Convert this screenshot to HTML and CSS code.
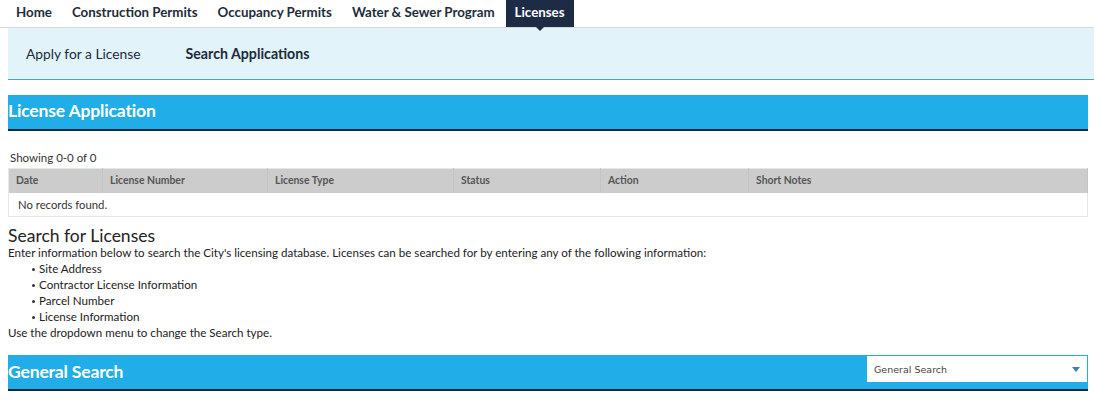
FILE: index.html
```html
<!DOCTYPE html>
<html lang="en">
<head>
    <meta charset="UTF-8">
    <title>Licenses</title>
    <link rel="stylesheet" href="styles.css">
</head>
<body>

    <div id="topnav">
        <a class="tab" href="#">Home</a>
        <a class="tab" href="#">Construction Permits</a>
        <a class="tab" href="#">Occupancy Permits</a>
        <a class="tab" href="#">Water &amp; Sewer Program</a>
        <a class="tab selected" href="#">Licenses</a>
    </div>

    <div id="subnav">
        <a class="sublink" href="#">Apply for a License</a>
        <a class="sublink current" href="#">Search Applications</a>
    </div>

    <div class="section-bar first">
        <h2>License Application</h2>
    </div>

    <div id="results">
        <div class="count">Showing 0-0 of 0</div>
        <table class="grid">
            <thead>
                <tr>
                    <th class="c-date">Date</th>
                    <th class="c-num">License Number</th>
                    <th class="c-type">License Type</th>
                    <th class="c-status">Status</th>
                    <th class="c-action">Action</th>
                    <th>Short Notes</th>
                </tr>
            </thead>
            <tbody>
                <tr>
                    <td colspan="6">No records found.</td>
                </tr>
            </tbody>
        </table>
    </div>

    <div id="instructions">
        <h3>Search for Licenses</h3>
        <p>Enter information below to search the City's licensing database. Licenses can be searched for by entering any of the following information:</p>
        <ul>
            <li>Site Address</li>
            <li>Contractor License Information</li>
            <li>Parcel Number</li>
            <li>License Information</li>
        </ul>
        <p>Use the dropdown menu to change the Search type.</p>
    </div>

    <div class="section-bar search">
        <h2>General Search</h2>
        <div class="select">
            <span>General Search</span>
            <span class="caret"></span>
        </div>
    </div>

</body>
</html>
```

FILE: styles.css
```css
* {
    box-sizing: border-box;
}

body {
    margin: 0;
    font-family: Lato, 'Open Sans', sans-serif;
    color: #222;
    background-color: #ffffff;
}

/* TOP NAVIGATION */
#topnav {
    display: flex;
    height: 28px;
    padding-left: 6px;
    border-bottom: 1px solid #d6d6d6;
}

.tab {
    position: relative;
    display: block;
    padding: 4px 10px 0 10px;
    height: 27px;
    font-size: 13.3px;
    font-weight: 700;
    color: #1d2b3a;
    text-decoration: none;
}

.tab.selected {
    background-color: #1d2b45;
    color: #ffffff;
    margin-left: 1px;
    padding: 4px 9px 0 9px;
}

.tab.selected::after {
    content: "";
    position: absolute;
    left: 50%;
    bottom: -4px;
    margin-left: -4px;
    border-left: 4px solid transparent;
    border-right: 4px solid transparent;
    border-top: 4px solid #1d2b45;
}

/* SUB NAVIGATION */
#subnav {
    display: flex;
    align-items: center;
    gap: 45px;
    height: 52px;
    margin-left: 8px;
    padding-left: 18px;
    padding-bottom: 1px;
    background-color: #e3f3fa;
    border-bottom: 1px solid #47a5c4;
}

.sublink {
    font-size: 13.8px;
    color: #1d2b3a;
    text-decoration: none;
}

.sublink.current {
    font-weight: 700;
    font-size: 14.2px;
}

/* SECTION BARS */
.section-bar {
    display: flex;
    align-items: center;
    justify-content: space-between;
    height: 36px;
    margin: 15px 6px 0 8px;
    padding-bottom: 3px;
    background-color: #20ade8;
    border-bottom: 2px solid #0f2a3c;
}

.section-bar h2 {
    margin: 0;
    font-size: 17.6px;
    font-weight: 700;
    color: #ffffff;
    letter-spacing: -0.2px;
}

.section-bar.search {
    margin-top: 14px;
    align-items: flex-start;
}

.section-bar.search h2 {
    margin-top: 6px;
}

.select {
    display: flex;
    align-items: center;
    justify-content: space-between;
    width: 220px;
    height: 26px;
    margin-top: 1px;
    margin-right: 1px;
    padding: 0 7px 0 7px;
    background-color: #ffffff;
    font-family: 'DejaVu Sans', sans-serif;
    font-size: 9.5px;
    color: #444;
}

.caret {
    border-left: 4px solid transparent;
    border-right: 4px solid transparent;
    border-top: 5px solid #3c7fb0;
}

/* RESULTS TABLE */
#results {
    margin: 20px 6px 0 8px;
}

.count {
    padding-left: 2px;
    font-size: 11.5px;
    color: #333;
    height: 17px;
}

.grid {
    width: 100%;
    border-collapse: collapse;
    border: 1px solid #e6e6e6;
}

.grid th {
    height: 24px;
    padding: 0 7px 1px 7px;
    text-align: left;
    background-color: #cccccc;
    font-size: 10.4px;
    font-weight: 700;
    color: #555;
    border-right: 1px solid #c4c4c4;
}

.grid th.c-date { width: 94px; }
.grid th.c-num { width: 165px; }
.grid th.c-type { width: 186px; }
.grid th.c-status { width: 147px; }
.grid th.c-action { width: 148px; }

.grid td {
    height: 24px;
    padding: 0 9px;
    font-size: 11.3px;
    color: #333;
}

/* INSTRUCTIONS */
#instructions {
    margin: 9px 8px 0 8px;
    font-size: 11.6px;
    color: #222;
}

#instructions h3 {
    margin: 0;
    font-size: 17.5px;
    font-weight: 400;
    line-height: 19px;
    color: #222;
}

#instructions p {
    margin: 0;
    line-height: 16px;
}

#instructions ul {
    margin: 0;
    padding-left: 23px;
    list-style: none;
}

#instructions li {
    line-height: 16px;
}

#instructions li::before {
    content: "";
    display: inline-block;
    width: 3px;
    height: 3px;
    margin: 0 4px 2px 1px;
    border-radius: 50%;
    background-color: #333;
}
```
